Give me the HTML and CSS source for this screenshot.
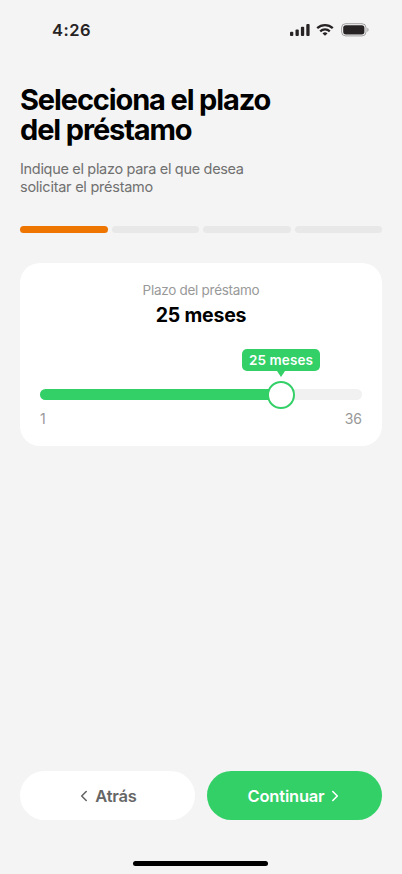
FILE: index.html
```html
<!DOCTYPE html>
<html lang="es">
<head>
<meta charset="utf-8">
<meta name="viewport" content="width=device-width, initial-scale=1">
<title>Plazo del préstamo</title>
<link rel="stylesheet" href="styles.css">
</head>
<body>
<div class="screen">
  <header class="status">
    <span class="time">4:26</span>
    <div class="status-icons">
      <svg width="20" height="14" viewBox="0 0 20 14" fill="#272324">
        <rect x="0" y="8.8" width="3.3" height="4.2" rx="1"/>
        <rect x="5.5" y="6.6" width="3.3" height="6.4" rx="1"/>
        <rect x="10.9" y="3.8" width="3.3" height="9.2" rx="1"/>
        <rect x="16.3" y="1" width="3.3" height="12" rx="1"/>
      </svg>
      <svg class="wifi" width="18" height="14" viewBox="0 0 18 14" fill="none" stroke="#272324" stroke-width="2.3">
        <path d="M1.2 5.2A11.2 11.2 0 0 1 16.8 5.2"/>
        <path d="M4.2 8.3A7 7 0 0 1 13.8 8.3"/>
        <path d="M9 12.8L6.5 10.4A3.6 3.6 0 0 1 11.5 10.4Z" fill="#272324" stroke="none"/>
      </svg>
      <svg class="battery" width="28" height="14" viewBox="0 0 28 14">
        <rect x=".6" y=".7" width="24.4" height="12.2" rx="4" fill="none" stroke="#272324" stroke-opacity=".4"/>
        <rect x="2.2" y="2.2" width="21.2" height="9.2" rx="2.6" fill="#272324"/>
        <path d="M26.3 4.7V8.9Q27.6 8.3 27.6 6.8T26.3 4.7Z" fill="#272324" fill-opacity=".4"/>
      </svg>
    </div>
  </header>
  <main>
    <h1>Selecciona el plazo<br>del préstamo</h1>
    <p class="intro">Indique el plazo para el que desea<br><span class="loose">solicitar el préstamo</span></p>
    <div class="steps"><i class="done"></i><i></i><i></i><i></i></div>
    <section class="card">
      <div class="label">Plazo del préstamo</div>
      <div class="value">25 meses</div>
      <div class="slider">
        <div class="fill"></div>
        <div class="knob"></div>
        <div class="tip">25 meses</div>
      </div>
      <div class="limits"><span>1</span><span>36</span></div>
    </section>
  </main>
  <footer>
    <div class="actions">
      <button class="back"><svg width="8" height="12" viewBox="0 0 8 12"><path d="M6.2 1.5L1.7 6L6.2 10.5"/></svg><span>Atrás</span></button>
      <button class="next"><span>Continuar</span><svg width="8" height="12" viewBox="0 0 8 12"><path d="M1.8 1.5L6.3 6L1.8 10.5"/></svg></button>
    </div>
    <div class="home"></div>
  </footer>
</div>
</body>
</html>
```
FILE: styles.css
```css
* { box-sizing: border-box; }
body { margin: 0; background: #f4f4f4; font-family: Inter, "Liberation Sans", sans-serif; }
.screen { width: 402px; height: 874px; display: flex; flex-direction: column; overflow: hidden; white-space: nowrap; }
.status { height: 59px; padding: 0 33px 0 52px; display: flex; justify-content: space-between; }
.time { margin-top: 19px; font-size: 16.5px; line-height: 22px; font-weight: 600; color: #272324; letter-spacing: .5px; }
.status-icons { display: flex; margin-top: 23px; }
.wifi { margin-left: 6px; }
.battery { margin-left: 7px; }
main { padding: 26px 20px 0; flex: 1; }
h1 { margin: 0; font-size: 29px; line-height: 30px; font-weight: 700; letter-spacing: -1.13px; color: #000; }
.intro { margin: 15px 0 0; font-size: 14.5px; line-height: 18px; font-weight: 400; letter-spacing: -.32px; color: #707070; }
.loose { letter-spacing: -.25px; }
.steps { margin-top: 30px; display: flex; gap: 4px; }
.steps i { flex: 1; height: 7px; border-radius: 4px; background: #e8e8e8; }
.steps .done { background: #ee7500; }
.card { margin-top: 30px; height: 183px; padding: 18px 20px 0; border-radius: 20px; background: #fff; }
.label { text-align: center; font-size: 13.5px; line-height: 18px; letter-spacing: -.28px; color: #999; }
.value { margin-top: 3px; text-align: center; font-size: 19.5px; line-height: 26px; font-weight: 700; letter-spacing: -.2px; color: #000; }
.slider { position: relative; margin-top: 61px; height: 11px; border-radius: 6px; background: #f1f1f1; }
.fill { width: 241px; height: 11px; border-radius: 6px 0 0 6px; background: #33d068; }
.knob { position: absolute; left: 227px; top: -8px; width: 28px; height: 28px; border: 2px solid #33d068; border-radius: 50%; background: #fff; }
.tip { position: absolute; left: 202px; top: -40px; width: 78px; height: 22px; border-radius: 5px; background: #33d068; color: #fff; text-align: center; font-size: 13.5px; line-height: 22px; font-weight: 600; letter-spacing: .08px; }
.tip::after { content: ""; position: absolute; left: 35px; top: 22px; border: 4px solid transparent; border-top: 6px solid #33d068; border-bottom: 0; }
.limits { margin-top: 10px; display: flex; justify-content: space-between; font-size: 14px; line-height: 18px; color: #999; }
footer { padding: 0 20px 8px; }
.actions { display: flex; gap: 12px; }
button { flex: none; width: 175px; height: 49px; padding: 0; border: 0; border-radius: 25px; display: flex; align-items: center; justify-content: center; gap: 7px; font: 600 16.5px/22px Inter, "Liberation Sans", sans-serif; letter-spacing: -.2px; }
button span { padding-top: 1px; }
button svg { fill: none; stroke: currentColor; stroke-width: 1.6; stroke-linecap: round; stroke-linejoin: round; }
.back { background: #fff; color: #666; padding-left: 2px; }
.next { background: #33d068; color: #fff; padding-right: 2px; }
.home { margin: 41px 0 0 113px; width: 135px; height: 5px; border-radius: 3px; background: #000; }
```
